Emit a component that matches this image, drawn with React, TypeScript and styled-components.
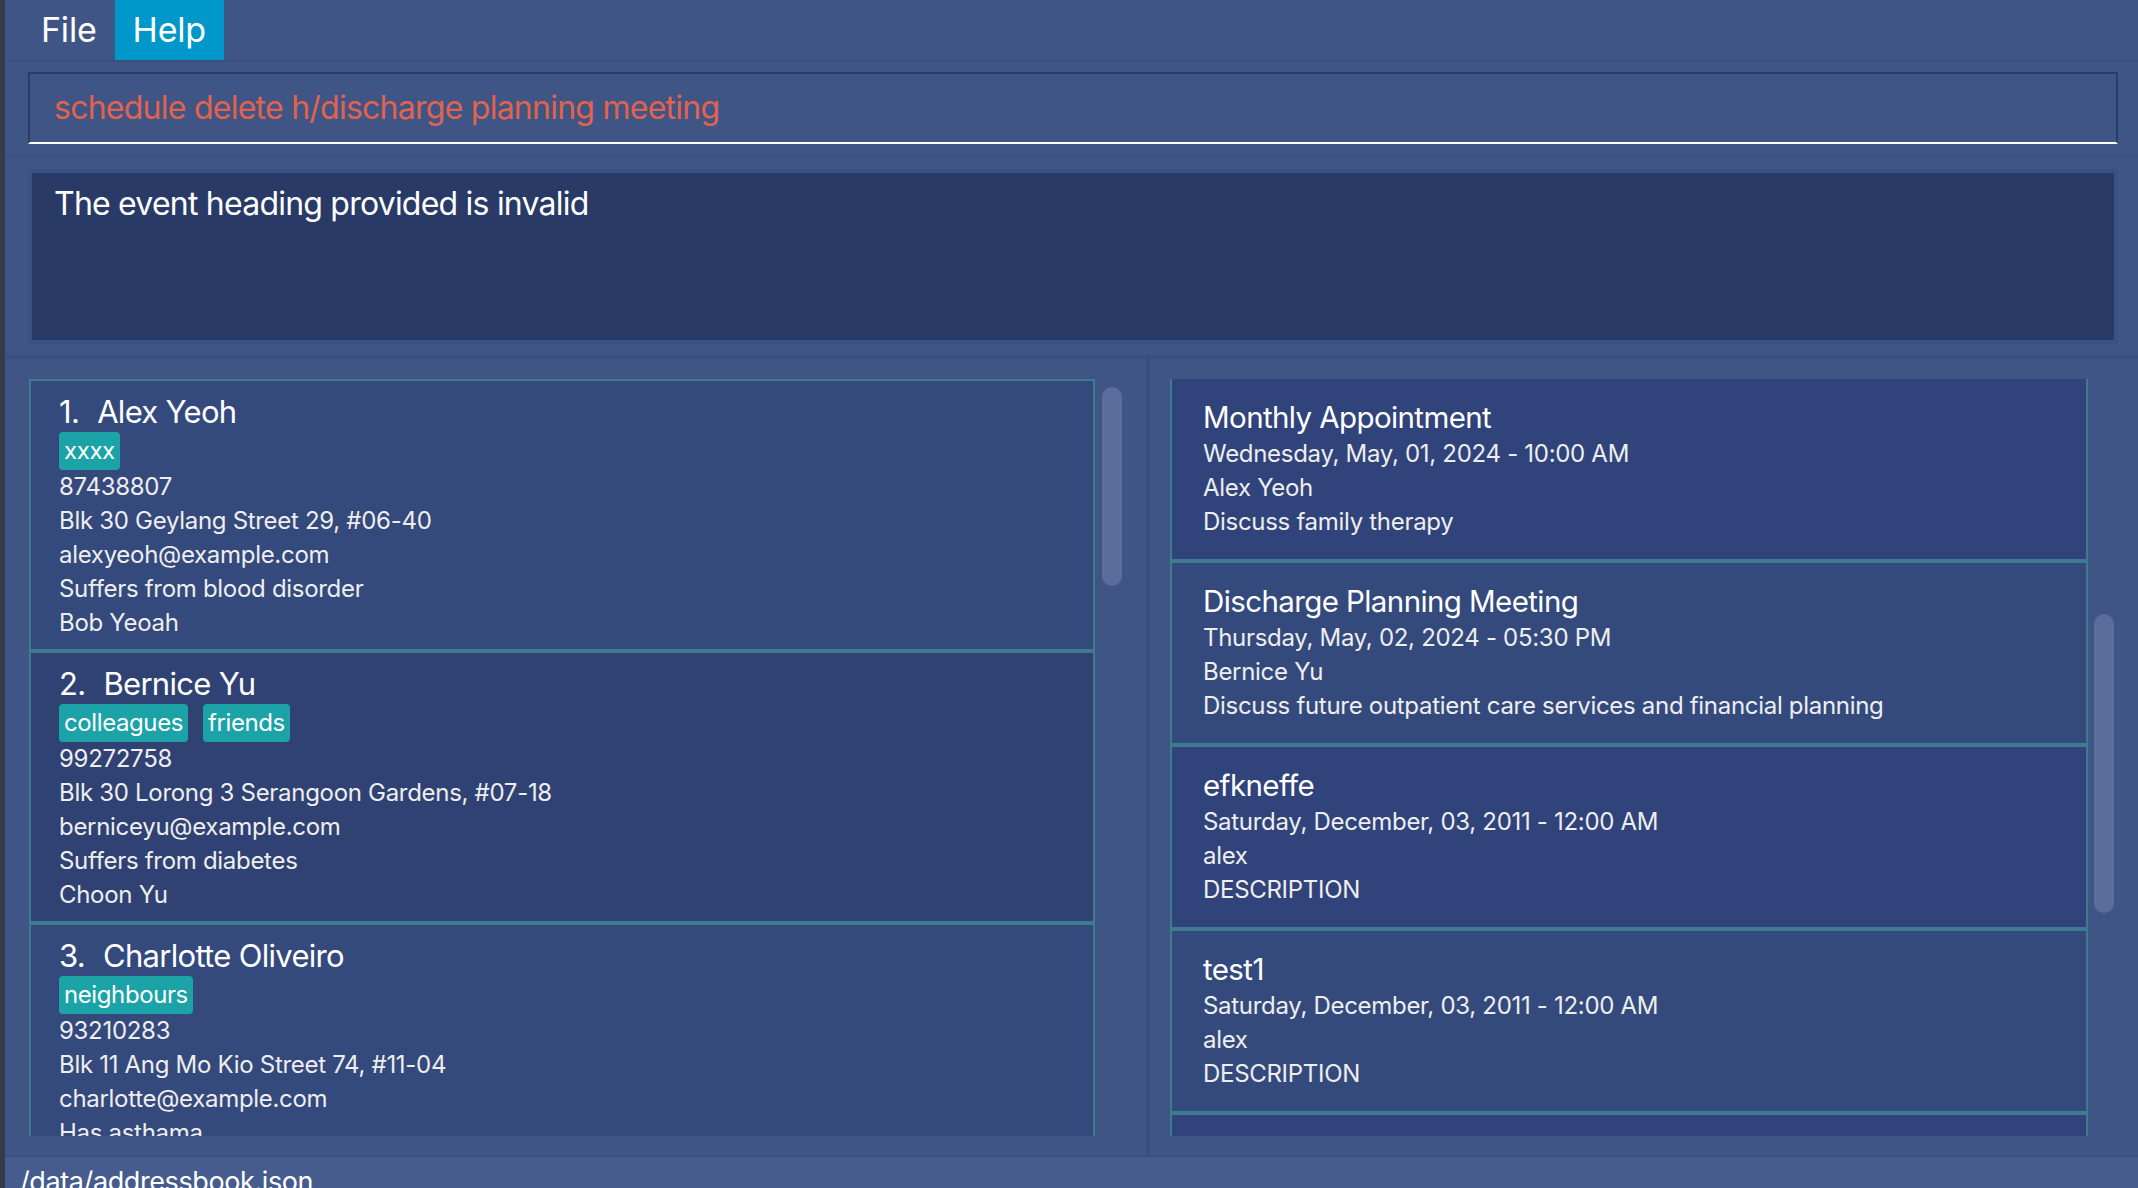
import React from 'react'
import styled, { createGlobalStyle } from 'styled-components'

const GlobalStyle = createGlobalStyle`
  html, body {
    margin: 0;
    padding: 0;
    background: #3e5585;
    overflow: hidden;
  }
  * {
    box-sizing: border-box;
  }
`

const persons = [
  {
    name: 'Alex Yeoh',
    tags: ['xxxx'],
    phone: '87438807',
    address: 'Blk 30 Geylang Street 29, #06-40',
    email: 'alexyeoh@example.com',
    note: 'Suffers from blood disorder',
    caregiver: 'Bob Yeoah',
  },
  {
    name: 'Bernice Yu',
    tags: ['colleagues', 'friends'],
    phone: '99272758',
    address: 'Blk 30 Lorong 3 Serangoon Gardens, #07-18',
    email: 'berniceyu@example.com',
    note: 'Suffers from diabetes',
    caregiver: 'Choon Yu',
  },
  {
    name: 'Charlotte Oliveiro',
    tags: ['neighbours'],
    phone: '93210283',
    address: 'Blk 11 Ang Mo Kio Street 74, #11-04',
    email: 'charlotte@example.com',
    note: 'Has asthama',
    caregiver: '',
  },
]

const events = [
  {
    title: 'Monthly Appointment',
    when: 'Wednesday, May, 01, 2024 - 10:00 AM',
    who: 'Alex Yeoh',
    desc: 'Discuss family therapy',
  },
  {
    title: 'Discharge Planning Meeting',
    when: 'Thursday, May, 02, 2024 - 05:30 PM',
    who: 'Bernice Yu',
    desc: 'Discuss future outpatient care services and financial planning',
  },
  {
    title: 'efkneffe',
    when: 'Saturday, December, 03, 2011 - 12:00 AM',
    who: 'alex',
    desc: 'DESCRIPTION',
  },
  {
    title: 'test1',
    when: 'Saturday, December, 03, 2011 - 12:00 AM',
    who: 'alex',
    desc: 'DESCRIPTION',
  },
  {
    title: 'test1',
    when: 'Saturday, December, 03, 2011 - 12:00 AM',
    who: 'alex',
    desc: 'DESCRIPTION',
  },
]

export default function App() {
  return (
    <>
      <GlobalStyle />
      <Window>
        <MenuBar>
          <MenuItem>File</MenuItem>
          <MenuItem active>Help</MenuItem>
        </MenuBar>

        <CommandSection>
          <CommandBox>schedule delete h/discharge planning meeting</CommandBox>
        </CommandSection>

        <ResultSection>
          <ResultBox>The event heading provided is invalid</ResultBox>
        </ResultSection>

        <SplitPane>
          <ListPane side="left">
            <ListViewport>
              {persons.map((p, i) => (
                <PersonCard key={p.name} odd={i % 2 === 1}>
                  <PersonName>
                    {i + 1}.<NameText>{p.name}</NameText>
                  </PersonName>
                  <TagRow>
                    {p.tags.map((t) => (
                      <Tag key={t}>{t}</Tag>
                    ))}
                  </TagRow>
                  <CardLine>{p.phone}</CardLine>
                  <CardLine>{p.address}</CardLine>
                  <CardLine>{p.email}</CardLine>
                  <CardLine>{p.note}</CardLine>
                  {p.caregiver && <CardLine>{p.caregiver}</CardLine>}
                </PersonCard>
              ))}
            </ListViewport>
            <ScrollTrack>
              <ScrollThumb offset={8} size={199} />
            </ScrollTrack>
          </ListPane>

          <Divider />

          <ListPane side="right">
            <ListViewport>
              {events.map((e, i) => (
                <EventCard key={i} odd={i % 2 === 1}>
                  <EventTitle>{e.title}</EventTitle>
                  <CardLine>{e.when}</CardLine>
                  <CardLine>{e.who}</CardLine>
                  <CardLine>{e.desc}</CardLine>
                </EventCard>
              ))}
            </ListViewport>
            <ScrollTrack>
              <ScrollThumb offset={235} size={299} />
            </ScrollTrack>
          </ListPane>
        </SplitPane>

        <StatusBar>/data/addressbook.json</StatusBar>
      </Window>
    </>
  )
}

const Window = styled.div`
  width: 2138px;
  height: 1188px;
  display: flex;
  flex-direction: column;
  background: #3e5585;
  border-left: 5px solid #343b49;
  font-family: Inter, 'Noto Sans', sans-serif;
  color: #f2f2f2;
  overflow: hidden;
`

const MenuBar = styled.div`
  height: 62px;
  flex: none;
  display: flex;
  align-items: stretch;
  padding-left: 18px;
  border-bottom: 2px solid #3a5081;
`

const MenuItem = styled.div<{ active?: boolean }>`
  display: flex;
  align-items: center;
  padding: 0 18px 2px;
  font-size: 34px;
  letter-spacing: -0.2px;
  color: #ffffff;
  background: ${(p) => (p.active ? '#0097ca' : 'transparent')};
`

const CommandSection = styled.div`
  flex: none;
  padding: 10px 20px 11px 23px;
  border-bottom: 3px solid #3a5081;
`

const CommandBox = styled.div`
  height: 72px;
  display: flex;
  align-items: center;
  padding: 0 0 2px 24px;
  border: 2px solid #2b3c69;
  border-bottom: 2px solid #ffffff;
  font-size: 32px;
  letter-spacing: -0.75px;
  color: #e2634d;
`

const ResultSection = styled.div`
  flex: none;
  padding: 11px 20px 11px 23px;
  border-bottom: 4px solid #3a5081;
`

const ResultBox = styled.div`
  height: 175px;
  border: 4px solid #3a5283;
  background: #293a67;
  padding: 11px 22px;
  font-size: 32px;
  line-height: 40px;
  letter-spacing: -0.78px;
  color: #ffffff;
`

const SplitPane = styled.div`
  flex: 1;
  min-height: 0;
  display: flex;
`

const ListPane = styled.div<{ side: 'left' | 'right' }>`
  display: flex;
  gap: ${(p) => (p.side === 'left' ? '7px' : '6px')};
  padding: 20px 24px 19px ${(p) => (p.side === 'left' ? '24px' : '20px')};
  width: ${(p) => (p.side === 'left' ? '1141px' : 'auto')};
  flex: ${(p) => (p.side === 'left' ? 'none' : '1')};
  min-width: 0;
`

const Divider = styled.div`
  width: 4px;
  flex: none;
  background: #394f80;
`

const ListViewport = styled.div`
  flex: 1;
  min-width: 0;
  overflow: hidden;
  display: flex;
  flex-direction: column;
`

const PersonCard = styled.div<{ odd: boolean }>`
  flex: none;
  display: flex;
  flex-direction: column;
  align-items: flex-start;
  background: ${(p) => (p.odd ? '#2f4273' : '#34497c')};
  border: 2px solid #3e7b8f;
  padding: 11px 0 9px 28px;
`

const EventCard = styled.div<{ odd: boolean }>`
  flex: none;
  display: flex;
  flex-direction: column;
  background: ${(p) => (p.odd ? '#344a7d' : '#30437a')};
  border: 0 solid #3e7b8f;
  border-width: 0 2px 4px 2px;
  padding: 18px 0 20px 31px;
`

const PersonName = styled.div`
  font-size: 31px;
  line-height: 40px;
  letter-spacing: -0.7px;
  color: #ffffff;
  white-space: nowrap;
`

const EventTitle = styled.div`
  font-size: 29.5px;
  line-height: 40px;
  letter-spacing: -0.6px;
  color: #ffffff;
  white-space: nowrap;
`

const NameText = styled.span`
  margin-left: 18px;
`

const TagRow = styled.div`
  display: flex;
  gap: 15px;
  height: 38px;
`

const Tag = styled.span`
  display: flex;
  align-items: center;
  padding: 0 5px 2px;
  border-radius: 4px;
  background: #1ba3a7;
  color: #ffffff;
  font-size: 24px;
  letter-spacing: -0.4px;
`

const CardLine = styled.div`
  font-size: 24px;
  line-height: 34px;
  letter-spacing: -0.3px;
  color: #eeeeee;
  white-space: nowrap;
`

const ScrollTrack = styled.div`
  width: 20px;
  flex: none;
  display: flex;
  flex-direction: column;
`

const ScrollThumb = styled.div<{ offset: number; size: number }>`
  margin-top: ${(p) => p.offset}px;
  height: ${(p) => p.size}px;
  border-radius: 10px;
  background: #5a6d9d;
`

const StatusBar = styled.div`
  flex: none;
  height: 33px;
  overflow: hidden;
  border-top: 2px solid #3a5081;
  background: #465c8e;
  padding: 5px 0 0 15px;
  font-size: 27px;
  line-height: 40px;
  letter-spacing: -0.4px;
  color: #ffffff;
`
